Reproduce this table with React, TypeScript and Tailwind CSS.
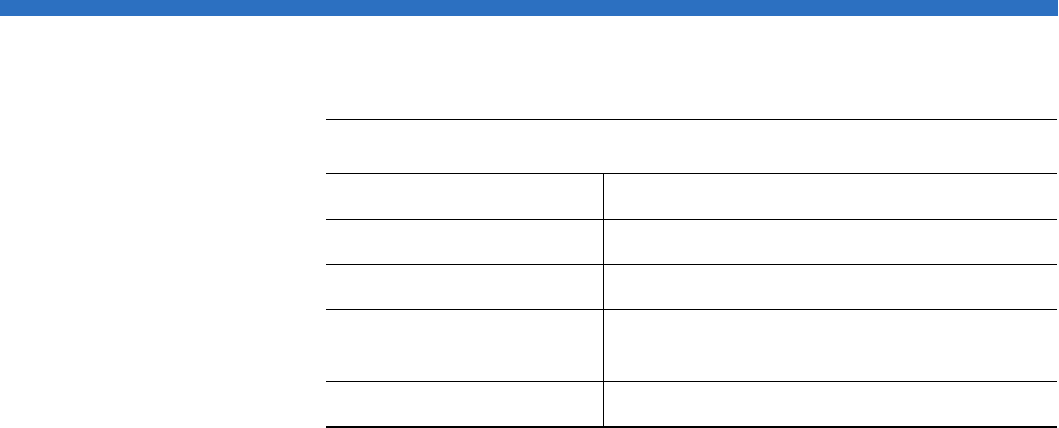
import React from "react";

const rows = [45, 44, 44, 71, 44];

export default function App() {
  return (
    <div className="min-h-screen bg-white font-['Liberation_Sans',sans-serif]">
      {/* top bar */}
      <div className="h-4 w-[1058px] bg-[#2C70C1]" />

      {/* empty table */}
      <div className="ml-[326px] mt-[103px] w-[731px] border-t border-black">
        <div className="h-[53px]" />
        {rows.map((h, i) => (
          <div key={i} className="grid grid-cols-[278px_1fr] border-t border-black">
            <div className="border-r border-black" style={{ height: h }} />
            <div />
          </div>
        ))}
        <div className="border-t-2 border-black" />
      </div>
    </div>
  );
}
